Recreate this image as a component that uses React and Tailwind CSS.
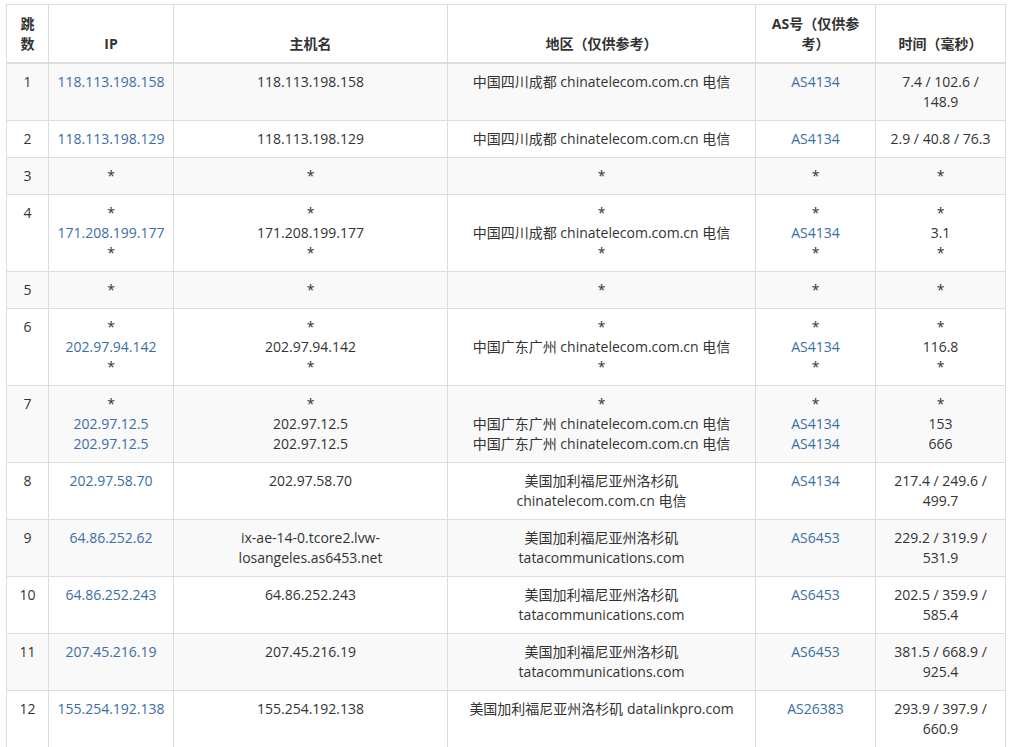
const rows = [
  ["1", ["118.113.198.158"], ["118.113.198.158"], ["中国四川成都 chinatelecom.com.cn 电信"], ["AS4134"], ["7.4 / 102.6 / 148.9"]],
  ["2", ["118.113.198.129"], ["118.113.198.129"], ["中国四川成都 chinatelecom.com.cn 电信"], ["AS4134"], ["2.9 / 40.8 / 76.3"]],
  ["3", ["*"], ["*"], ["*"], ["*"], ["*"]],
  ["4", ["*", "171.208.199.177", "*"], ["*", "171.208.199.177", "*"], ["*", "中国四川成都 chinatelecom.com.cn 电信", "*"], ["*", "AS4134", "*"], ["*", "3.1", "*"]],
  ["5", ["*"], ["*"], ["*"], ["*"], ["*"]],
  ["6", ["*", "202.97.94.142", "*"], ["*", "202.97.94.142", "*"], ["*", "中国广东广州 chinatelecom.com.cn 电信", "*"], ["*", "AS4134", "*"], ["*", "116.8", "*"]],
  ["7", ["*", "202.97.12.5", "202.97.12.5"], ["*", "202.97.12.5", "202.97.12.5"], ["*", "中国广东广州 chinatelecom.com.cn 电信", "中国广东广州 chinatelecom.com.cn 电信"], ["*", "AS4134", "AS4134"], ["*", "153", "666"]],
  ["8", ["202.97.58.70"], ["202.97.58.70"], ["美国加利福尼亚州洛杉矶", "chinatelecom.com.cn 电信"], ["AS4134"], ["217.4 / 249.6 / 499.7"]],
  ["9", ["64.86.252.62"], ["ix-ae-14-0.tcore2.lvw-losangeles.as6453.net"], ["美国加利福尼亚州洛杉矶", "tatacommunications.com"], ["AS6453"], ["229.2 / 319.9 / 531.9"]],
  ["10", ["64.86.252.243"], ["64.86.252.243"], ["美国加利福尼亚州洛杉矶", "tatacommunications.com"], ["AS6453"], ["202.5 / 359.9 / 585.4"]],
  ["11", ["207.45.216.19"], ["207.45.216.19"], ["美国加利福尼亚州洛杉矶", "tatacommunications.com"], ["AS6453"], ["381.5 / 668.9 / 925.4"]],
  ["12", ["155.254.192.138"], ["155.254.192.138"], ["美国加利福尼亚州洛杉矶 datalinkpro.com"], ["AS26383"], ["293.9 / 397.9 / 660.9"]],
];

function Cell({ lines, link }) {
  return (
    <td className="border border-[#dddddd] px-2 py-2 align-top text-center">
      {lines.map((l, i) => (
        <div key={i} className={link && l !== "*" ? "text-[#3a6ea5]" : ""}>{l}</div>
      ))}
    </td>
  );
}

export default function App() {
  return (
    <div className="bg-white pt-[4px] pl-[6px] w-[1009px]" style={{ fontFamily: '"Open Sans","Noto Sans CJK SC",sans-serif' }}>
      <table className="border-collapse w-[1000px] text-[14px] leading-[20px] text-[#333333] table-fixed">
        <colgroup>
          <col className="w-[42px]" /><col className="w-[125px]" /><col className="w-[274px]" /><col className="w-[308px]" /><col className="w-[120px]" /><col className="w-[130px]" />
        </colgroup>
        <thead>
          <tr className="font-bold">
            {["跳数", "IP", "主机名", "地区（仅供参考）", "AS号（仅供参考）", "时间（毫秒）"].map((h, i) => (
              <th key={i} className="border border-[#dddddd] border-b-2 px-2 pt-2 pb-2 align-bottom text-center font-bold h-[58px]">
                {i === 0 ? <>跳<br />数</> : i === 4 ? <>AS号（仅供参<br />考）</> : h}
              </th>
            ))}
          </tr>
        </thead>
        <tbody>
          {rows.map((r, idx) => (
            <tr key={idx} className={idx % 2 === 0 ? "bg-[#f9f9f9]" : "bg-white"}>
              <td className="border border-[#dddddd] px-2 py-2 align-top text-center">{r[0]}</td>
              <Cell lines={r[1]} link />
              <Cell lines={r[2]} />
              <Cell lines={r[3]} />
              <Cell lines={r[4]} link />
              <Cell lines={r[5]} />
            </tr>
          ))}
        </tbody>
      </table>
    </div>
  );
}
